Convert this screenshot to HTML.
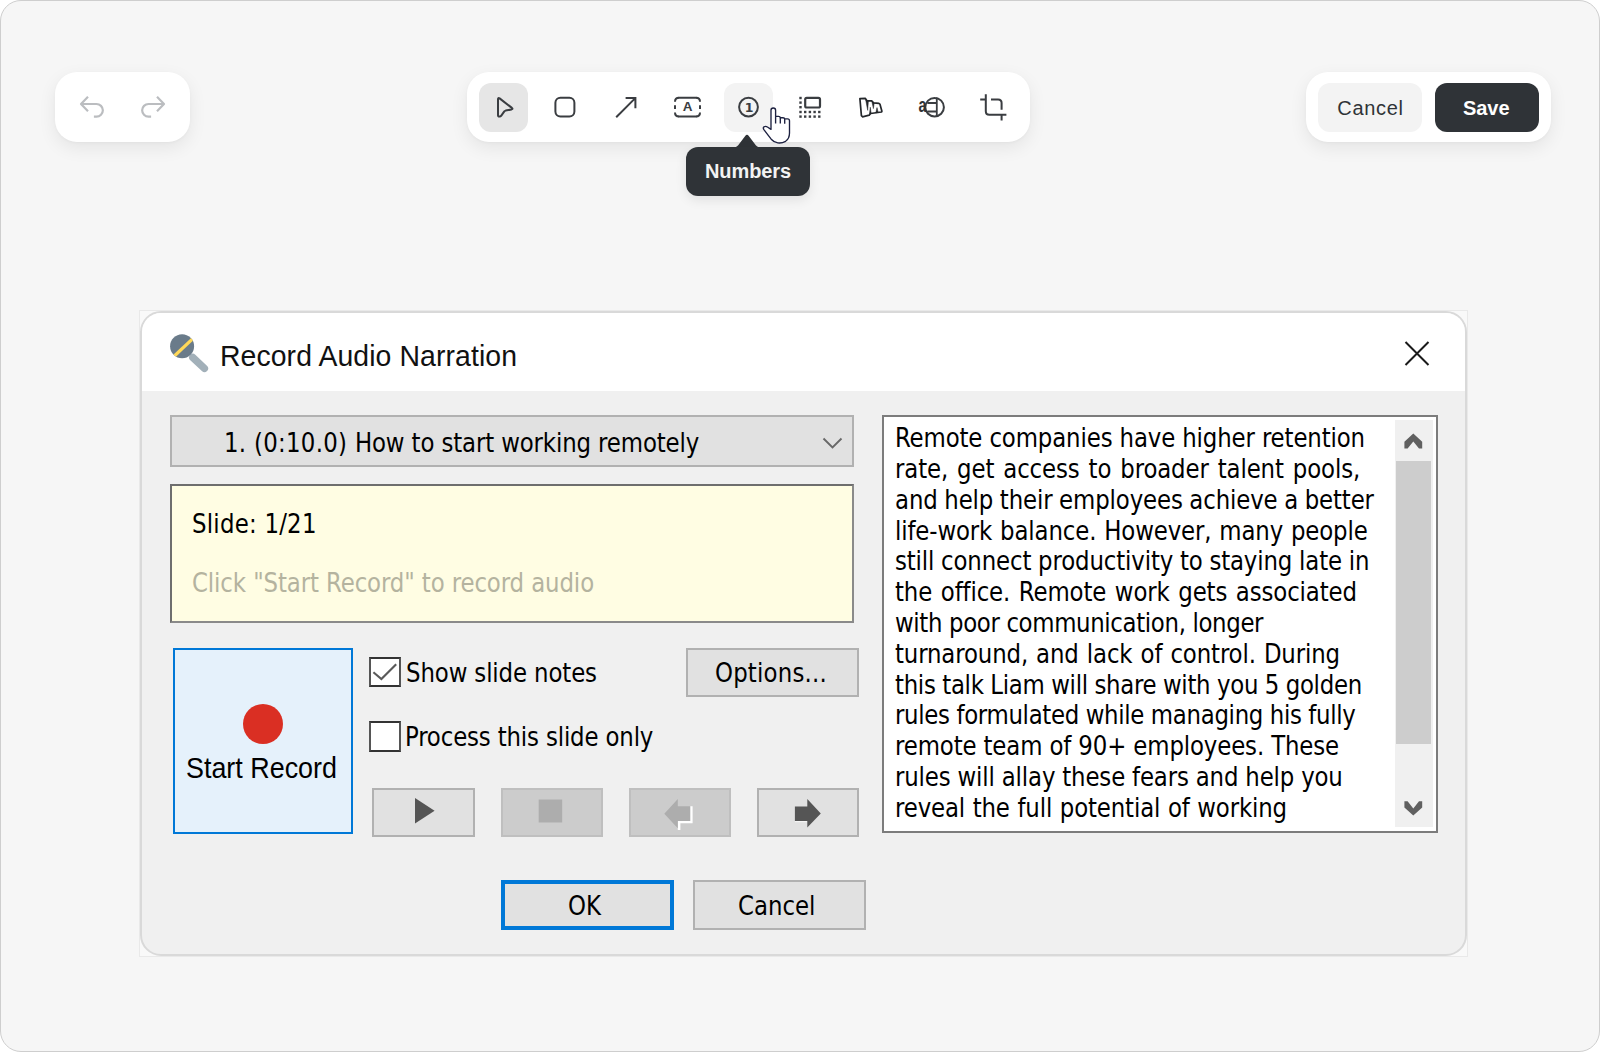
<!DOCTYPE html>
<html lang="en">
<head>
<meta charset="utf-8">
<title>Record Audio Narration</title>
<style>
*{box-sizing:border-box;margin:0;padding:0}
html,body{width:1600px;height:1052px;background:#fff;overflow:hidden}
body{font-family:"Liberation Sans",sans-serif;position:relative}
.abs{position:absolute}
#page{position:absolute;left:0;top:0;width:1600px;height:1052px;background:#f6f6f6;border:1.5px solid #cecece;border-radius:21px}
.panel{position:absolute;top:72px;height:70px;background:#fff;border-radius:22px;box-shadow:0 6px 18px rgba(0,0,0,.075),0 1px 3px rgba(0,0,0,.03)}
.tb{position:absolute;top:11px;width:49px;height:49px;border-radius:12px}
.tb svg{position:absolute;left:0;top:0;width:49px;height:49px;overflow:visible}
.ic{fill:none;stroke:#3a3d41;stroke-width:2;stroke-linecap:round;stroke-linejoin:round}
#tip{position:absolute;left:686px;top:147px;width:124px;height:49px;background:#2f3337;border-radius:12px;color:#f3f3f3;font-weight:700;font-size:20px;line-height:49px;text-align:center;letter-spacing:-0.1px;box-shadow:0 4px 12px rgba(0,0,0,.09)}
.win{font-family:"DejaVu Sans Condensed","DejaVu Sans","Liberation Sans",sans-serif;font-size:26.6px;color:#000;white-space:nowrap;line-height:30px;transform:scaleX(.955);transform-origin:0 0;margin-top:-.4px}
.btn{position:absolute;background:#e1e1e1;border:2.5px solid #b1b1b1}
.btn.dis{background:#cccccc;border-color:#bfbfbf}
</style>
</head>
<body>
<div id="page"></div>

<!-- undo / redo -->
<div class="panel" style="left:55px;width:135px">
  <svg class="abs" style="left:0;top:0" width="135" height="70" viewBox="0 0 135 70">
    <g fill="none" stroke="#bbbdc0" stroke-width="2.2" stroke-linecap="butt" stroke-linejoin="round">
      <path d="M33 24.8 26 32l7 7.2"/><path d="M26 32h15.5a6.35 6.35 0 0 1 0 12.7h-2.6"/>
      <path d="M102 24.8 109 32l-7 7.2"/><path d="M109 32H93.5a6.35 6.35 0 0 0 0 12.7h2.6"/>
    </g>
  </svg>
</div>

<!-- centre toolbar -->
<div class="panel" id="tools" style="left:467px;width:563px">
  <div class="tb" style="left:12px;background:#e6e6e6"></div>
  <div class="tb" style="left:257px;background:#f3f3f3"></div>
  <svg class="abs" style="left:0;top:0;overflow:visible" width="563" height="70" viewBox="467 72 563 70">
    <!-- cursor -->
    <path class="ic" d="M498 99.2V115.3Q498 116.6 499.3 116.5L500 116.4Q500.8 116.3 501.3 115.6L504.3 111.4Q504.8 110.8 505.6 110.6L511.6 109.4Q513.2 109 511.9 107.9L499.6 98.4Q498 97.3 498 99.2Z"/>
    <!-- square -->
    <rect class="ic" x="555.4" y="97.7" width="19" height="18.8" rx="5" ry="5"/>
    <!-- arrow -->
    <path class="ic" style="stroke-linecap:butt;stroke-linejoin:miter" d="M616.2 117.2 635 98.4M625.6 98H635.4V108.2"/>
    <!-- text box -->
    <g class="ic">
      <path d="M679 97.7H696M679 116.5H696"/>
      <path style="stroke-linecap:butt" d="M679 97.7Q675 97.7 675 101.7M675 105.2V109M675 112.5Q675 116.5 679 116.5"/>
      <path style="stroke-linecap:butt" d="M696 97.7Q700 97.7 700 101.7M700 105.2V109M700 112.5Q700 116.5 696 116.5"/>
    </g>
    <text x="687.5" y="111.4" text-anchor="middle" font-family="Liberation Sans, sans-serif" font-weight="700" font-size="13.5" fill="#3a3d41">A</text>
    <!-- numbers -->
    <circle class="ic" cx="748.5" cy="107.1" r="9.4"/>
    <text x="749" y="111.5" text-anchor="middle" font-family="DejaVu Sans, sans-serif" font-weight="700" font-size="12.5" fill="#3a3d41">1</text>
    <!-- blur -->
    <rect class="ic" x="805.2" y="97.8" width="14.8" height="9.7" rx="1.6" ry="1.6" style="stroke-width:2.2"/>
    <g fill="#3a3d41">
      <rect x="799.3" y="96.8" width="2.4" height="2.4"/><rect x="799.3" y="101.4" width="2.4" height="2.4"/><rect x="799.3" y="106" width="2.4" height="2.4"/>
      <rect x="799.3" y="110.8" width="2.4" height="2.4"/><rect x="804" y="110.8" width="2.4" height="2.4"/><rect x="808.7" y="110.8" width="2.4" height="2.4"/><rect x="813.4" y="110.8" width="2.4" height="2.4"/><rect x="818.1" y="110.8" width="2.4" height="2.4"/>
      <rect x="799.3" y="115.4" width="2.4" height="2.4"/><rect x="804" y="115.4" width="2.4" height="2.4"/><rect x="808.7" y="115.4" width="2.4" height="2.4"/><rect x="813.4" y="115.4" width="2.4" height="2.4"/><rect x="818.1" y="115.4" width="2.4" height="2.4"/>
    </g>
    <!-- marker -->
    <path d="M859.9 98.7 865.4 98.3 866.9 100.9 871.7 100.8 873.6 102.9 878.9 103.4 879.9 104.1 881.9 111.3 881.5 112 870.6 113.5 869.2 115.2 862.5 116.8 861.4 115.6Z" fill="#fff" stroke="#24272b" stroke-width="1.7" stroke-linejoin="round"/>
    <g fill="#24272b" stroke="#24272b" stroke-width=".5" stroke-linejoin="round">
      <path d="M865.6 99.4 868.4 100.8 867.7 110.4Z"/>
      <path d="M871.8 101.2 874.2 103 873.4 108.6Z"/>
      <path d="M869.4 114.6 871.2 113.6 870.3 107.2Z"/>
      <path d="M875.8 112.8 878.2 112.4 877 107.6Z"/>
    </g>
    <!-- translate-ish -->
    <circle class="ic" cx="934.6" cy="107.2" r="9.3"/>
    <path class="ic" style="stroke-width:1.8" d="M936.8 98.2V116.2M928 103H936.8M928 111.5H936.8"/>
    <text transform="translate(918.4 112.2) scale(.72 1)" font-family="Liberation Sans, sans-serif" font-weight="700" font-size="20" fill="#2f3236">a</text>
    <!-- crop -->
    <path class="ic" style="stroke-linecap:butt" d="M985.8 94.3V111.2Q985.8 114.7 989.3 114.7H1006.4M980.2 99.5H985.8M991 99.5H998.1Q1001.6 99.5 1001.6 103V109.7M1001.6 114.7V120.5"/>
    <!-- hand pointer -->
    <path d="M771 110.2Q771 108 773.3 108Q775.6 108 775.6 110.2V116.3H778.6Q780.2 116.3 780.3 117.7H783Q784.6 117.7 784.7 118.9H787.6Q789.5 118.9 789.5 120.8V133Q789.5 138.6 785.6 141.3Q782 143.4 777.8 142.9Q773.8 142.2 771.2 139.2Q767.2 134 763.9 129.6Q762.7 127.8 764 126.8Q765.6 125.9 767.4 127L771 129.4Z" fill="#fff" stroke="#1d2140" stroke-width="1.35" stroke-linejoin="round"/>
    <path d="M775.6 116.3V123.5M780.3 117.7V123.6M784.7 118.9V123.7" fill="none" stroke="#1d2140" stroke-width="1.35" stroke-linecap="butt"/>
  </svg>
</div>

<!-- cancel / save -->
<div class="panel" style="left:1306px;width:245px">
  <div class="abs" style="left:12px;top:11px;width:104px;height:49px;border-radius:12px;background:#f3f3f3;color:#2f3337;font-size:20px;line-height:51px;text-align:center;letter-spacing:.7px;padding-left:1px">Cancel</div>
  <div class="abs" style="left:129px;top:11px;width:104px;height:49px;border-radius:12px;background:#2f3337;color:#fff;font-size:20px;font-weight:700;line-height:51px;text-align:center;padding-right:1.5px">Save</div>
</div>

<!-- tooltip -->
<svg class="abs" style="left:726px;top:132px" width="44" height="18" viewBox="726 132 44 18"><path d="M730.5 148Q735.8 148 738.2 145.2L745.2 135.9Q747 133.8 748.8 135.9L755.8 145.2Q758.2 148 763.5 148Z" fill="#2f3337"/></svg>
<div id="tip">Numbers</div>

<!-- DIALOG -->
<div id="shot" class="abs" style="left:139px;top:310px;width:1329px;height:647px;background:#f9f9f9;border:1px solid #e9e9e9"></div>
<div id="dlg" class="abs" style="left:140px;top:311px;width:1327px;height:645px;background:#f0f0f0;border:2px solid #d9d9d9;border-radius:21px;overflow:hidden">
  <div class="abs" style="left:0;top:0;width:1327px;height:78px;background:#fff"></div>
</div>

<!-- title bar -->
<svg class="abs" style="left:166px;top:332px" width="46" height="44" viewBox="166 332 46 44">
  <path d="M192.8 357.5 204.4 368.4" stroke="#a2b0b9" stroke-width="7.4" stroke-linecap="round" fill="none"/>
  <circle cx="182.1" cy="346.2" r="12" fill="#6a7b8a"/>
  <clipPath id="mh"><circle cx="182.1" cy="346.2" r="12"/></clipPath><path d="M172 358.2 194.4 337.1" stroke="#ffd858" stroke-width="3.3" fill="none" clip-path="url(#mh)"/>
</svg>
<div id="title" class="abs" style="left:219.6px;top:337.6px;font-family:'Liberation Sans',sans-serif;font-size:30.2px;line-height:36px;color:#111;white-space:nowrap;letter-spacing:.1px;transform:scaleX(.94);transform-origin:0 0">Record Audio Narration</div>
<svg class="abs" style="left:1400px;top:336px" width="34" height="34" viewBox="1400 336 34 34"><path d="M1405.5 342 1428.5 365M1428.5 342 1405.5 365" stroke="#1a1a1a" stroke-width="2" fill="none"/></svg>

<!-- combo -->
<div class="btn" style="left:170px;top:415px;width:684px;height:52px"></div>
<div id="combo" class="win abs" style="left:223.6px;top:428.7px;letter-spacing:-.12px"><span style="letter-spacing:.32px">1. (0:10.0) </span>How to start working remotely</div>
<svg class="abs" style="left:820px;top:434px" width="26" height="18" viewBox="820 434 26 18"><path d="M823.5 438.5 832.5 447.5 841.5 438.5" stroke="#686868" stroke-width="1.9" fill="none"/></svg>

<!-- yellow info -->
<div class="abs" style="left:170px;top:484px;width:684px;height:139px;background:#fffde3;border:2px solid #6e6e6e;border-right-color:#8a8a8a;border-bottom-color:#8a8a8a"></div>
<div id="slide" class="win abs" style="left:192px;top:509.2px;letter-spacing:.25px">Slide: 1/21</div>
<div id="hint" class="win abs" style="left:192px;top:568.2px;color:#b4b39f;letter-spacing:-.1px">Click "Start Record" to record audio</div>

<!-- start record -->
<div class="abs" style="left:173px;top:648px;width:180px;height:186px;background:#e5f1fb;border:2px solid #0078d7"></div>
<div class="abs" style="left:243px;top:704px;width:40px;height:40px;border-radius:50%;background:#da2f23"></div>
<div id="start" class="win abs" style="left:186.4px;top:750px;font-family:'Liberation Sans',sans-serif;font-size:30.4px;letter-spacing:0;transform:scaleX(.885);margin-top:0;line-height:34px">Start Record</div>

<!-- checkboxes -->
<div class="abs" style="left:369px;top:656.8px;width:31.8px;height:30.4px;background:#fff;border:2.4px solid #333;border-left-color:#555;border-right-color:#555"></div>
<svg class="abs" style="left:369px;top:657px" width="32" height="31" viewBox="369 657 32 31"><path d="M373.4 672.2 381.4 679 396.2 664.3" stroke="#5a5a5a" stroke-width="2.1" fill="none"/></svg>
<div id="cb1" class="win abs" style="left:406px;top:658.2px;letter-spacing:-.12px">Show slide notes</div>
<div class="abs" style="left:369px;top:721.2px;width:31.8px;height:30.4px;background:#fff;border:2.4px solid #333;border-left-color:#555;border-right-color:#555"></div>
<div id="cb2" class="win abs" style="left:405px;top:722.2px;letter-spacing:-.15px">Process this slide only</div>

<!-- options -->
<div class="btn" style="left:686px;top:648px;width:173px;height:49px"></div>
<div id="opt" class="win abs" style="left:714.5px;top:658.7px;letter-spacing:.2px">Options...</div>

<!-- transport -->
<div class="btn" style="left:372px;top:787.5px;width:102.5px;height:49px"></div>
<div class="btn dis" style="left:500.5px;top:787.5px;width:102px;height:49px"></div>
<div class="btn dis" style="left:628.5px;top:787.5px;width:102px;height:49px"></div>
<div class="btn" style="left:756.5px;top:787.5px;width:102.5px;height:49px"></div>
<svg class="abs" style="left:372px;top:787px" width="488" height="50" viewBox="372 787 488 50">
  <path d="M415 798V823.5L434.6 810.8Z" fill="#555"/>
  <rect x="538.7" y="799.5" width="23.5" height="23" fill="#adadad"/>
  <path d="M690.2 806.3H692.6V823.3H680.4V830H677.8V820.9H690.2Z" fill="#fff"/>
  <path d="M664.3 813.7 677.8 799.1V806.3H690.2V820.9H677.8V828.2Z" fill="#adadad"/>
  <path d="M794.9 821H807.3V822.2H794.9Z" fill="#f4f4f4"/>
  <path d="M820.8 813.4 807.3 799.1V806.6H794.9V820.9H807.3V827.5Z" fill="#555"/>
</svg>

<!-- ok / cancel -->
<div class="abs" style="left:500.5px;top:879.5px;width:173px;height:50px;background:#e1e1e1;border:4px solid #0078d7"></div>
<div id="ok" class="win abs" style="left:567.5px;top:891.2px">OK</div>
<div class="btn" style="left:692.5px;top:879.5px;width:173.5px;height:50px"></div>
<div id="cancel2" class="win abs" style="left:738.3px;top:891.2px">Cancel</div>

<!-- notes -->
<div class="abs" style="left:882.3px;top:415px;width:556px;height:417.5px;background:#fff;border:2.5px solid #7c7c7c"></div>
<div id="notes" class="win abs" style="left:894.5px;top:423.8px;line-height:30.77px;white-space:nowrap;letter-spacing:-.13px">
<span class="ln">Remote companies have higher retention</span><br>
<span class="ln" style="word-spacing:2px">rate, get access to broader talent pools,</span><br>
<span class="ln" style="word-spacing:-.5px">and help their employees achieve a better</span><br>
<span class="ln" style="word-spacing:.8px">life-work balance. However, many people</span><br>
<span class="ln" style="word-spacing:-.35px">still connect productivity to staying late in</span><br>
<span class="ln" style="word-spacing:1.6px">the office. Remote work gets associated</span><br>
<span class="ln" style="letter-spacing:-.36px">with poor communication, longer</span><br>
<span class="ln" style="word-spacing:1px">turnaround, and lack of control. During</span><br>
<span class="ln" style="letter-spacing:-.3px;word-spacing:-.3px">this talk Liam will share with you 5 golden</span><br>
<span class="ln" style="letter-spacing:-.32px;word-spacing:-.2px">rules formulated while managing his fully</span><br>
<span class="ln">remote team of 90+ employees. These</span><br>
<span class="ln" style="word-spacing:-.2px">rules will allay these fears and help you</span><br>
<span class="ln" style="word-spacing:.5px">reveal the full potential of working</span>
</div>
<div class="abs" style="left:1395.3px;top:420px;width:37.6px;height:406.5px;background:#f0f0f0"></div>
<div class="abs" style="left:1395.5px;top:460.5px;width:35.5px;height:283px;background:#cdcdcd"></div>
<svg class="abs" style="left:1400px;top:428px" width="28" height="392" viewBox="1400 428 28 392">
  <path d="M1413.3 433.6 1422.2 441.7V448.5H1419L1413.3 441.6 1407.6 448.5H1404.4V441.7Z" fill="#606060"/>
  <path d="M1413.3 815.6 1404.4 807.6V801.2H1407.6L1413.3 808.4 1419 801.2H1422.2V807.6Z" fill="#606060"/>
</svg>

</body>
</html>
